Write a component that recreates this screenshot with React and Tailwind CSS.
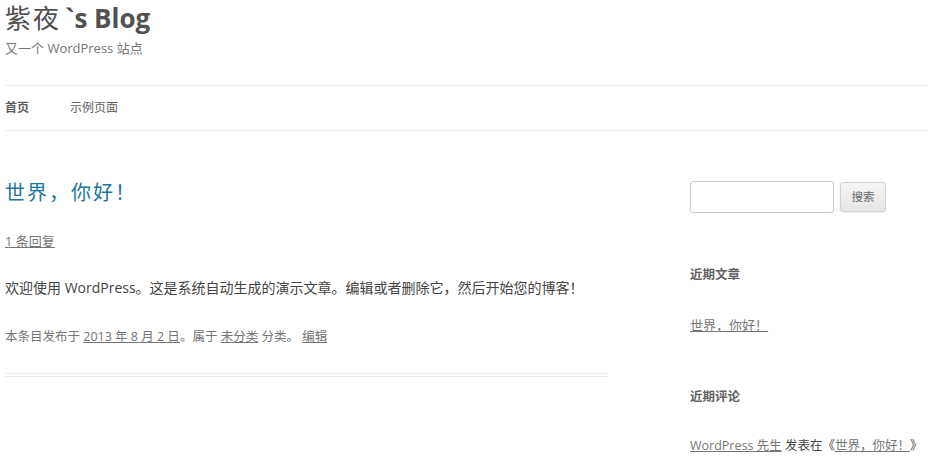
import React from 'react';

const font = { fontFamily: '"Open Sans", "Noto Sans CJK SC", sans-serif' };

const App = () => {
  return (
    <div className="min-h-[458px] w-[928px] overflow-hidden bg-white pl-[5px]" style={font}>
      {/* header */}
      <header>
        <h1 className="text-[26px] font-bold leading-[36px] text-[#515151] whitespace-nowrap">
          <span className="font-normal tracking-[2px]">紫夜</span>
          <span className="ml-[4px]">`s Blog</span>
        </h1>
        <p className="mt-[2px] h-[20px] text-[13px] leading-[20px] text-[#757575]">又一个 WordPress 站点</p>
      </header>

      <nav className="mt-[27px] flex h-[46px] items-center border-y border-[#ededed] text-[12px] text-[#5e5e5e]">
        <a className="mr-[41px] font-bold">首页</a>
        <a>示例页面</a>
      </nav>

      <div className="flex">
        {/* main column */}
        <main className="w-[603px]">
          <article className="border-b-4 border-double border-[#ededed] pb-[26px]">
            <h2 className="mt-[48px] h-[28px] text-[20px] leading-[28px] tracking-[2px] text-[#21759b]">世界，你好！</h2>
            <div className="mt-[24px] h-[20px] text-[13px] leading-[20px]">
              <a className="text-[#757575] underline">1 条回复</a>
            </div>
            <p className="mt-[25px] h-[24px] text-[14px] leading-[24px] text-[#444] whitespace-nowrap">
              欢迎使用 WordPress。这是系统自动生成的演示文章。编辑或者删除它，然后开始您的博客！
            </p>
            <footer className="mt-[27px] h-[20px] text-[12.5px] leading-[20px] text-[#757575] whitespace-nowrap">
              本条目发布于 <a className="underline">2013 年 8 月 2 日</a>。属于 <a className="underline">未分类</a> 分类。 <a className="underline">编辑</a>
            </footer>
          </article>
        </main>

        {/* sidebar */}
        <aside className="ml-[82px] w-[238px] whitespace-nowrap">
          <form className="mt-[50px] flex items-start">
            <input
              type="text"
              className="h-[32px] w-[144px] rounded-[3px] border border-[#ccc] px-[6px] text-[13px] outline-none"
            />
            <button
              type="button"
              className="ml-[6px] mt-[1px] h-[30px] w-[46px] rounded-[3px] border border-[#d2d2d2] bg-gradient-to-b from-[#f4f4f4] to-[#e6e6e6] text-[11.5px] text-[#6a6a6a] shadow-[0_1px_2px_rgba(64,64,64,0.1)]"
            >
              搜索
            </button>
          </form>

          <h3 className="mt-[53px] h-[18px] text-[12.5px] font-bold leading-[18px] text-[#636363]">近期文章</h3>
          <div className="mt-[31px] h-[20px] text-[13px] leading-[20px]">
            <a className="text-[#757575] underline">世界，你好！</a>
          </div>

          <h3 className="mt-[53px] h-[18px] text-[12.5px] font-bold leading-[18px] text-[#636363]">近期评论</h3>
          <div className="mt-[30px] h-[20px] text-[12.5px] leading-[20px] text-[#444]">
            <a className="text-[#757575] underline">WordPress 先生</a> 发表在《<a className="text-[#757575] underline">世界，你好！</a>》
          </div>
        </aside>
      </div>
    </div>
  );
};

export default App;
